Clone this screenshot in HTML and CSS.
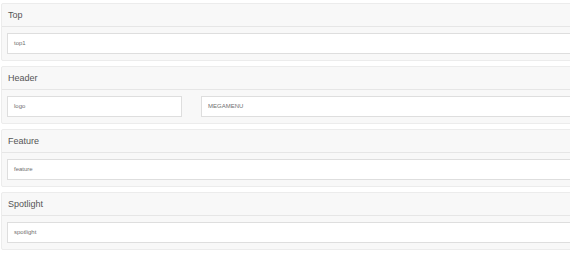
FILE: index.html
```html
<!DOCTYPE html>
<html lang="en">
<head>
    <meta charset="UTF-8">
    <title>Layout</title>
    <link rel="stylesheet" href="styles.css">
</head>
<body>
    <div class="pagina">
        <div class="painel">
            <div class="painel-titulo">Top</div>
            <div class="painel-corpo">
                <div class="bloco">top1</div>
            </div>
        </div>

        <div class="painel">
            <div class="painel-titulo">Header</div>
            <div class="painel-corpo linha">
                <div class="bloco">logo</div>
                <div class="bloco">MEGAMENU</div>
            </div>
        </div>

        <div class="painel">
            <div class="painel-titulo">Feature</div>
            <div class="painel-corpo">
                <div class="bloco">feature</div>
            </div>
        </div>

        <div class="painel">
            <div class="painel-titulo">Spotlight</div>
            <div class="painel-corpo">
                <div class="bloco">spotlight</div>
            </div>
        </div>
    </div>
</body>
</html>
```

FILE: styles.css
```css
body {
    margin: 0;
    padding: 0;
    font-family: "Liberation Sans", Arial, sans-serif;
    background-color: #fff;
    overflow: hidden;
}
.pagina {
    padding: 3px 0 0 1px;
    overflow: hidden;
}
.painel {
    background-color: #f8f8f8;
    border: 1px solid #ececec;
    border-radius: 2px;
    margin-bottom: 5px;
    margin-right: -20px;
}
.painel-titulo {
    height: 22px;
    line-height: 22px;
    padding-left: 6px;
    font-size: 9px;
    color: #555;
    border-bottom: 1px solid #e6e6e6;
}
.painel-corpo {
    padding: 6px 5px;
}
.linha {
    display: grid;
    grid-template-columns: 175px 1fr;
    gap: 19px;
}
.bloco {
    height: 19px;
    line-height: 19px;
    background-color: #fff;
    border: 1px solid #dedede;
    padding-left: 6px;
    font-size: 6px;
    color: #6f6f6f;
}
```
